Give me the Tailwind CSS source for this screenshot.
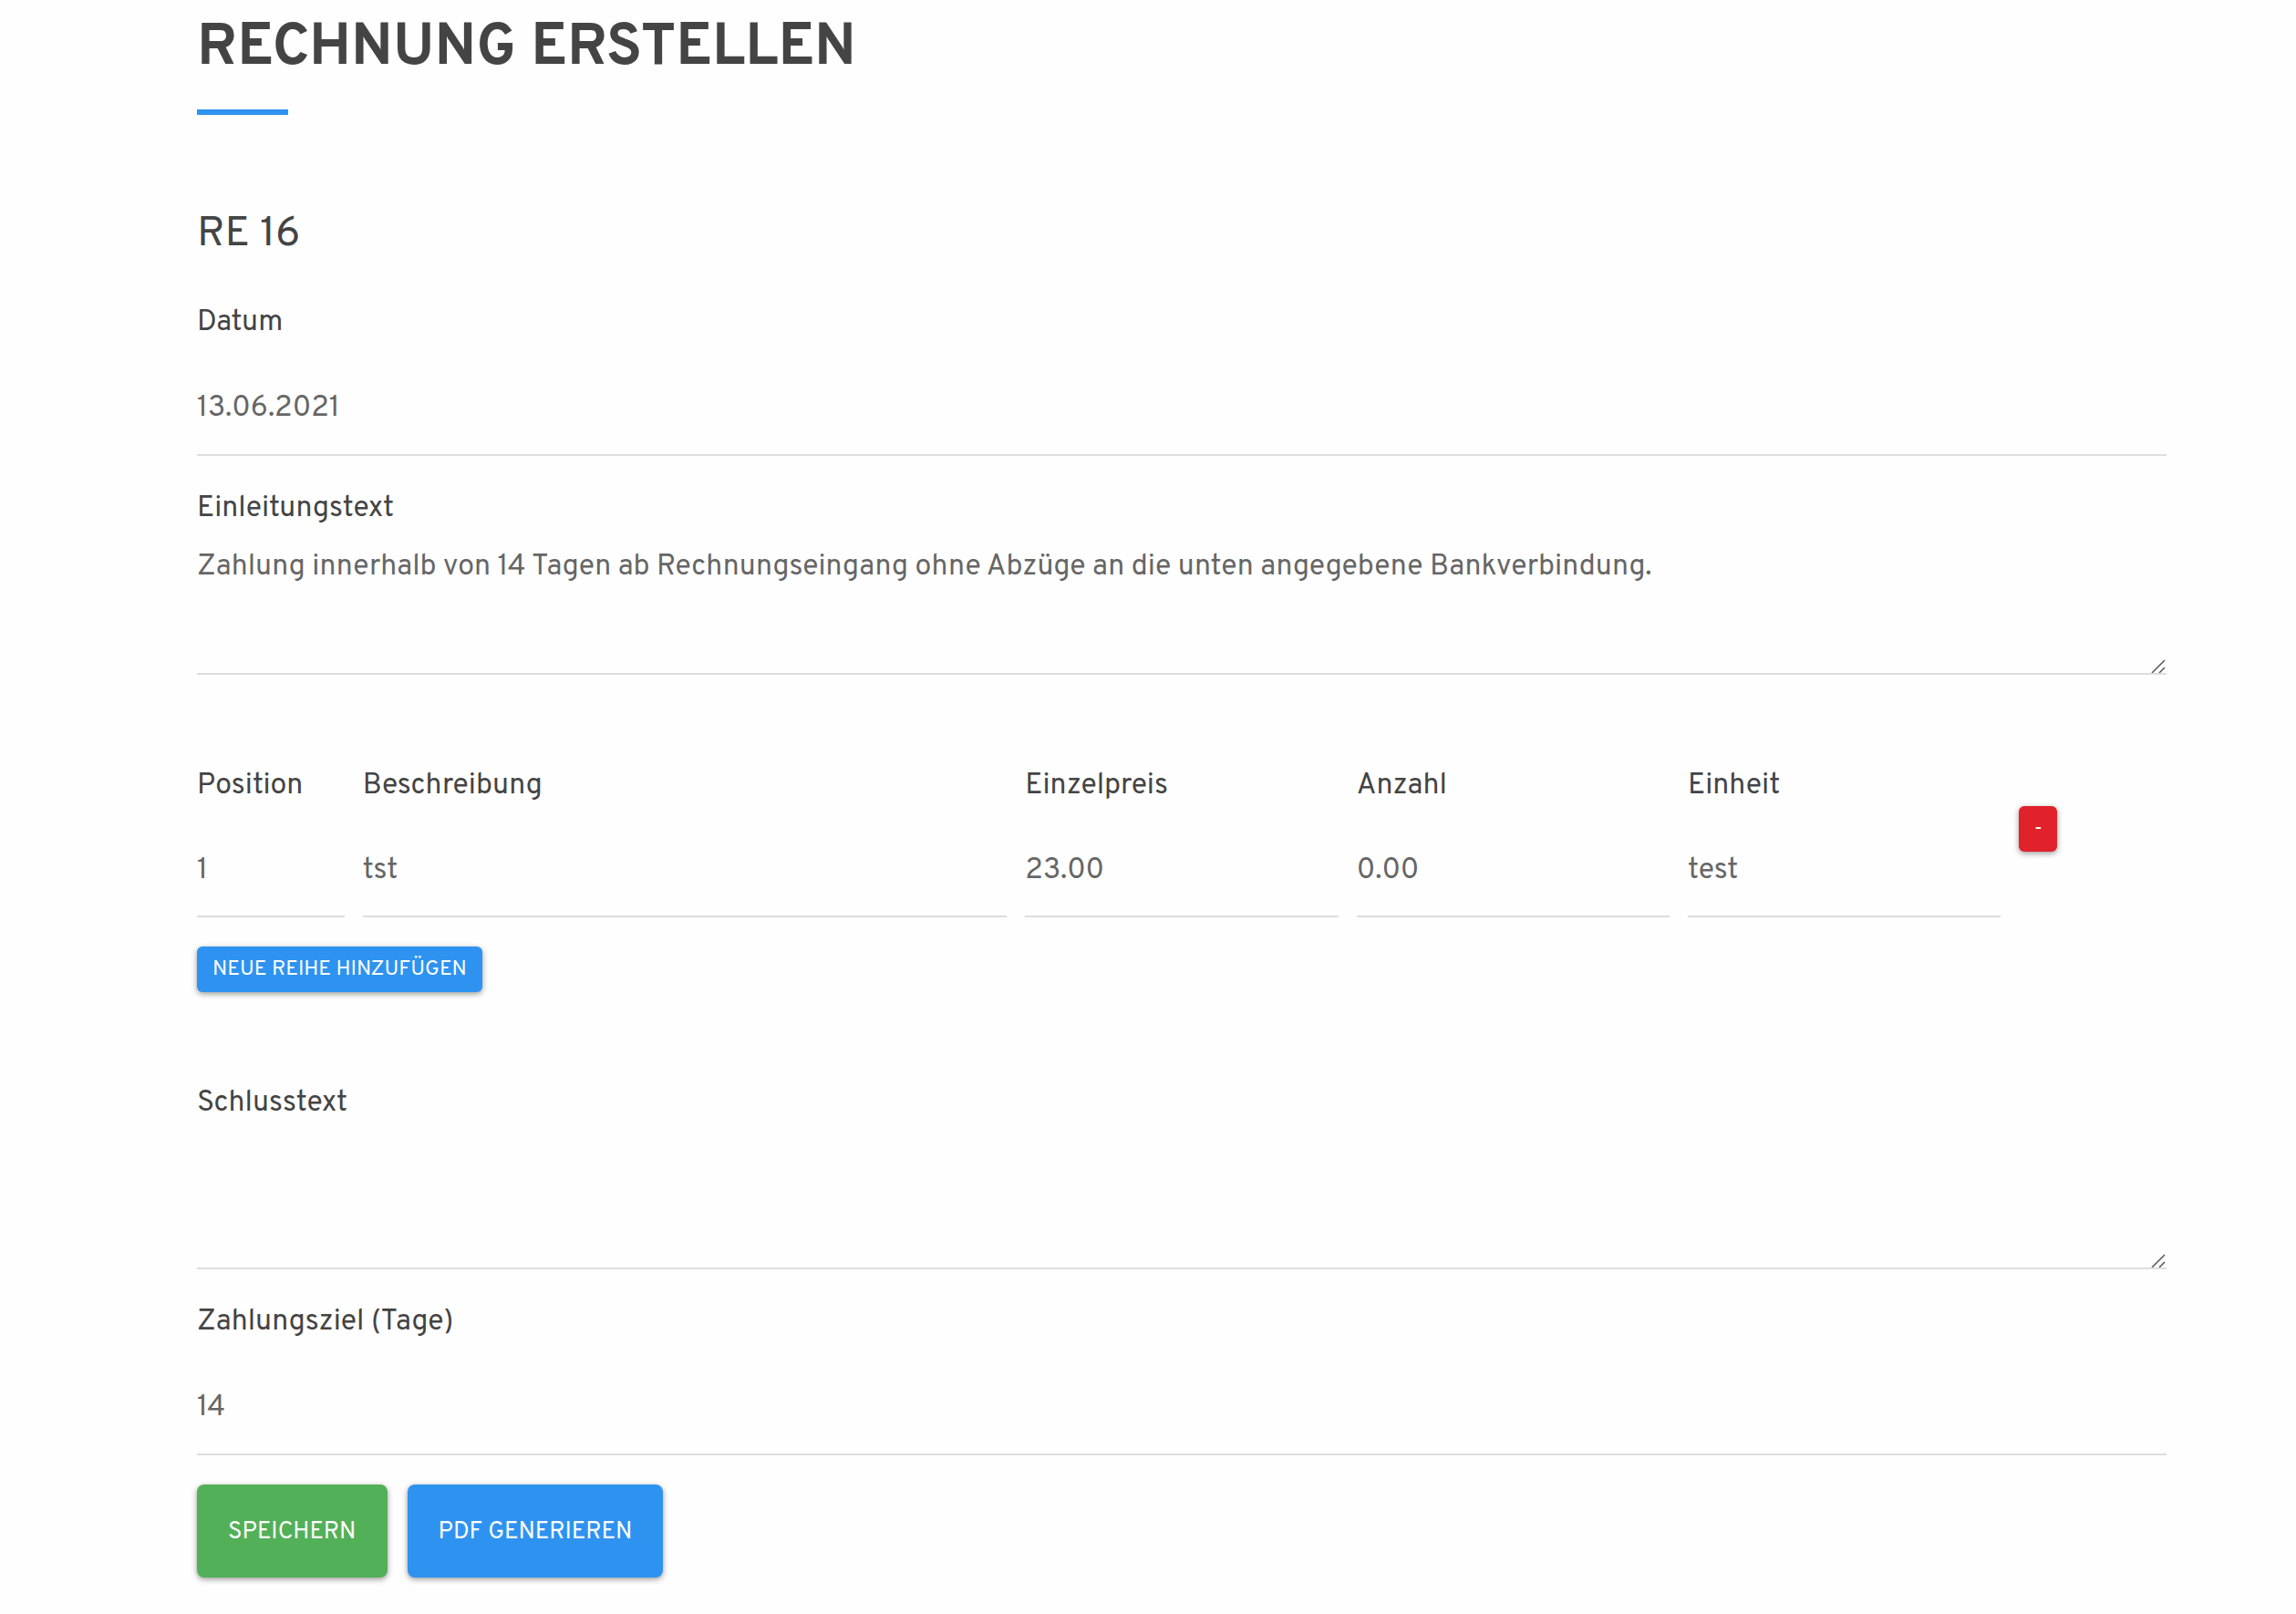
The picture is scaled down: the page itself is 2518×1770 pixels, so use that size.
<!DOCTYPE html>
<html lang="de">
<head>
<meta charset="utf-8">
<meta name="viewport" content="width=device-width, initial-scale=1">
<title>Rechnung erstellen</title>
<script src="https://cdn.jsdelivr.net/npm/@tailwindcss/browser@4"></script>
</head>
<body class="bg-[#fefefe] font-['Overpass',Roboto,sans-serif] text-[32px] leading-[48px] text-[#444444]">
<main class="pl-[216px] pr-[142px] pt-3.5 pb-8">
  <h1 class="text-[64px] leading-[80px] font-bold uppercase">Rechnung erstellen</h1>
  <div class="mt-[26px] h-1.5 w-[100px] bg-[#2e93f0]"></div>
  <h2 class="mt-[104px] text-[46px] leading-[56px]">RE 16</h2>

  <form class="mt-10">
    <div>
      <label for="datum" class="block pt-1">Datum</label>
      <input id="datum" type="text" value="13.06.2021" class="mt-3 block h-[110px] w-full border-b-2 border-[#dddddd] pt-2 text-[#666666] outline-none">
    </div>

    <div class="mt-[30px]">
      <label for="einleitung" class="block pt-1">Einleitungstext</label>
      <div class="relative mt-3">
        <textarea id="einleitung" rows="3" class="block h-[146px] w-full resize-none overflow-hidden border-b-2 border-[#dddddd] pt-1 text-[#666666] outline-none">Zahlung innerhalb von 14 Tagen ab Rechnungseingang ohne Abzüge an die unten angegebene Bankverbindung.</textarea>
        <svg class="pointer-events-none absolute right-px bottom-0.5 h-4 w-4" viewBox="0 0 16 16" fill="none" stroke="#555555" stroke-width="1.5" aria-hidden="true"><path d="M1 16 15 2M9 16l6-6"/></svg>
      </div>
    </div>

    <div class="mt-[94px] grid grid-cols-12 gap-5">
      <div class="col-span-1">
        <label for="position" class="block pt-1">Position</label>
        <input id="position" type="text" value="1" class="mt-3 block h-[108px] w-full border-b-2 border-[#dddddd] pt-2 text-[#666666] outline-none">
      </div>
      <div class="col-span-4">
        <label for="beschreibung" class="block pt-1">Beschreibung</label>
        <input id="beschreibung" type="text" value="tst" class="mt-3 block h-[108px] w-full border-b-2 border-[#dddddd] pt-2 text-[#666666] outline-none">
      </div>
      <div class="col-span-2">
        <label for="einzelpreis" class="block pt-1">Einzelpreis</label>
        <input id="einzelpreis" type="text" value="23.00" class="mt-3 block h-[108px] w-full border-b-2 border-[#dddddd] pt-2 text-[#666666] outline-none">
      </div>
      <div class="col-span-2">
        <label for="anzahl" class="block pt-1">Anzahl</label>
        <input id="anzahl" type="text" value="0.00" class="mt-3 block h-[108px] w-full border-b-2 border-[#dddddd] pt-2 text-[#666666] outline-none">
      </div>
      <div class="col-span-2">
        <label for="einheit" class="block pt-1">Einheit</label>
        <input id="einheit" type="text" value="test" class="mt-3 block h-[108px] w-full border-b-2 border-[#dddddd] pt-2 text-[#666666] outline-none">
      </div>
      <div class="col-span-1 pt-[50px]">
        <button type="button" class="flex h-[50px] w-[42px] items-center justify-center rounded-md bg-[#e1222b] pt-0.5 text-[23px] leading-[30px] text-white shadow-[0_2px_6px_rgba(0,0,0,0.4)]">-</button>
      </div>
    </div>

    <button type="button" class="mt-8 flex h-[50px] items-center rounded-md bg-[#2e93f0] px-[17px] pt-0.5 text-[23px] leading-[30px] text-white uppercase shadow-[0_2px_6px_rgba(0,0,0,0.4)]">Neue Reihe hinzufügen</button>

    <div class="mt-[94px]">
      <label for="schluss" class="block pt-1">Schlusstext</label>
      <div class="relative mt-3">
        <textarea id="schluss" rows="3" class="block h-[146px] w-full resize-none overflow-hidden border-b-2 border-[#dddddd] pt-1 text-[#666666] outline-none"></textarea>
        <svg class="pointer-events-none absolute right-px bottom-0.5 h-4 w-4" viewBox="0 0 16 16" fill="none" stroke="#555555" stroke-width="1.5" aria-hidden="true"><path d="M1 16 15 2M9 16l6-6"/></svg>
      </div>
    </div>

    <div class="mt-[30px]">
      <label for="zahlungsziel" class="block pt-1">Zahlungsziel (Tage)</label>
      <input id="zahlungsziel" type="text" value="14" class="mt-3 block h-[110px] w-full border-b-2 border-[#dddddd] pt-2 text-[#666666] outline-none">
    </div>

    <div class="mt-8 flex gap-[22px]">
      <button type="submit" class="h-[102px] rounded-lg bg-[#52b058] px-[34px] pt-1 text-[26px] leading-[38px] text-white uppercase shadow-[0_2px_6px_rgba(0,0,0,0.4)]">Speichern</button>
      <button type="button" class="h-[102px] rounded-lg bg-[#2e93f0] px-[34px] pt-1 text-[26px] leading-[38px] text-white uppercase shadow-[0_2px_6px_rgba(0,0,0,0.4)]">PDF generieren</button>
    </div>
  </form>
</main>
</body>
</html>
